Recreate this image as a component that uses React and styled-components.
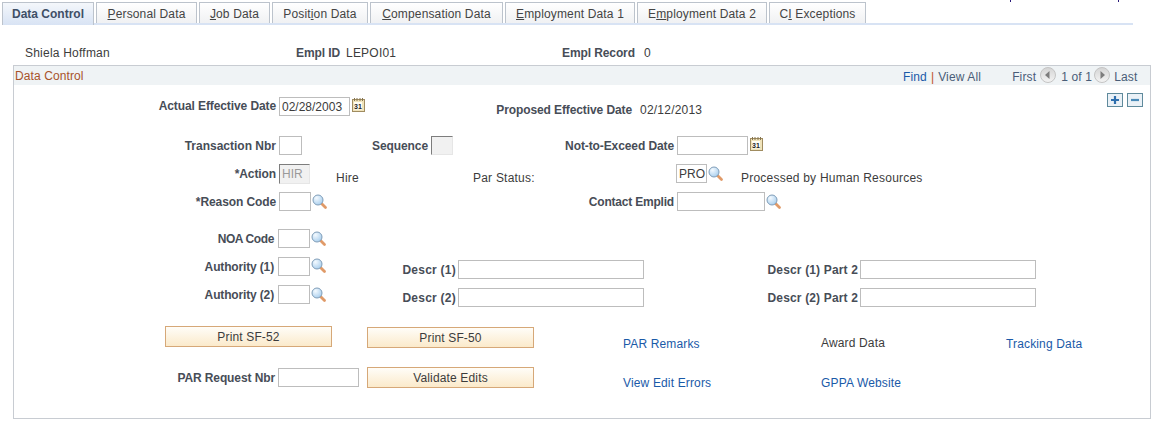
import React from "react";
import styled, { createGlobalStyle } from "styled-components";

const GlobalStyle = createGlobalStyle`
  html, body {
    margin: 0;
    padding: 0;
    background: #fff;
  }
  body {
    font-family: "Liberation Sans", Arial, sans-serif;
    font-size: 12px;
    color: #3c3c3c;
  }
`;

const Page = styled.div`
  width: 1160px;
  height: 426px;
  overflow: hidden;
  box-sizing: border-box;
`;

const TopMarks = styled.div`
  display: flex;
  height: 2px;
  padding-left: 1010px;
  gap: 107px;
`;

const TopMark = styled.span`
  width: 1px;
  height: 2px;
  background: #2a1a7a;
`;

const TabBar = styled.div`
  display: flex;
  gap: 2px;
  width: 1131px;
  height: 21px;
  margin-left: 2px;
  border-bottom: 2px solid #d8e3f4;
`;

const Tab = styled.div`
  box-sizing: border-box;
  width: ${({ $w }) => $w}px;
  height: ${({ $active }) => ($active ? "23px" : "21px")};
  padding-top: 4px;
  text-align: center;
  line-height: 15px;
  letter-spacing: ${({ $active }) => ($active ? "0" : "0.15px")};
  color: ${({ $active }) => ($active ? "#3f4f66" : "#444")};
  font-weight: ${({ $active }) => ($active ? "bold" : "normal")};
  border: 1px solid #bcc3cc;
  border-bottom: none;
  background: ${({ $active }) =>
    $active
      ? "linear-gradient(#f4f7fb, #d8e3f4)"
      : "linear-gradient(#fff, #f0f1f3)"};
`;

const NameRow = styled.div`
  display: flex;
  height: 16px;
  margin-top: 21px;
  line-height: 16px;
`;

const Panel = styled.div`
  box-sizing: border-box;
  width: 1138px;
  height: 354px;
  margin: 3px 0 0 13px;
  border: 1px solid #c8ccd2;
`;

const PanelHeader = styled.div`
  display: flex;
  align-items: center;
  height: 19px;
  background: #eff3f5;
  padding-left: 1px;
`;

const PanelTitle = styled.span`
  color: #a8522a;
  width: 888px;
  letter-spacing: 0.1px;
`;

const HeaderLinks = styled.div`
  display: flex;
  align-items: center;
  padding-top: 3px;
`;

const Pipe = styled.span`
  color: #c0502a;
  margin: 0 4px 0 4px;
`;

const HeaderText = styled.span`
  flex: none;
  width: ${({ $w }) => ($w ? `${$w}px` : "auto")};
  color: #4a5d78;
  white-space: nowrap;
  letter-spacing: 0.15px;
  margin-left: ${({ $ml }) => $ml || 0}px;
`;

const NavButton = styled.svg`
  flex: none;
  width: 16px;
  height: 16px;
  margin: -4px ${({ $mr }) => $mr || 0}px 0 ${({ $ml }) => $ml || 0}px;
`;

const Row = styled.div`
  display: flex;
  align-items: flex-start;
  height: ${({ $h }) => $h || 20}px;
  margin-top: ${({ $mt }) => $mt || 0}px;
`;

const Label = styled.span`
  flex: none;
  box-sizing: border-box;
  width: ${({ $w }) => $w}px;
  margin-left: ${({ $ml }) => $ml || 0}px;
  margin-top: ${({ $t }) => $t ?? 3}px;
  text-align: right;
  white-space: nowrap;
  font-weight: bold;
  line-height: 15px;
  letter-spacing: ${({ $ls }) => $ls ?? -0.1}px;
  color: #474d57;
`;

const Text = styled.span`
  flex: none;
  width: ${({ $w }) => ($w ? `${$w}px` : "auto")};
  margin-left: ${({ $ml }) => $ml || 0}px;
  margin-top: ${({ $t }) => $t || 0}px;
  line-height: 15px;
  white-space: nowrap;
  letter-spacing: ${({ $bold }) => ($bold ? "-0.1px" : "0.22px")};
  font-weight: ${({ $bold }) => ($bold ? "bold" : "normal")};
  color: ${({ $bold }) => ($bold ? "#474d57" : "#3c3c3c")};
`;

const LinkText = styled.a`
  flex: none;
  width: ${({ $w }) => ($w ? `${$w}px` : "auto")};
  margin-left: ${({ $ml }) => $ml || 0}px;
  margin-top: ${({ $t }) => $t || 0}px;
  line-height: 15px;
  letter-spacing: 0.15px;
  color: ${({ $plain }) => ($plain ? "#3c3c3c" : "#1a5aa8")};
`;

const Field = styled.div`
  flex: none;
  box-sizing: border-box;
  width: ${({ $w }) => $w}px;
  height: ${({ $h }) => $h || 19}px;
  margin-left: ${({ $ml }) => $ml ?? 3}px;
  margin-top: ${({ $t }) => $t || 0}px;
  padding: 1px 0 0 2px;
  line-height: 16px;
  background: ${({ $off }) => ($off ? "#f1f1f1" : "#fff")};
  color: ${({ $off }) => ($off ? "#9a9a9a" : "#3c3c3c")};
  border: 1px solid #bdbdbd;
  border-top-color: ${({ $off }) => ($off ? "#7d7d7d" : "#bdbdbd")};
  border-left-color: ${({ $off }) => ($off ? "#7d7d7d" : "#bdbdbd")};
  border-right-color: ${({ $off }) => ($off ? "#e6e6e6" : "#bdbdbd")};
  border-bottom-color: ${({ $off }) => ($off ? "#e6e6e6" : "#bdbdbd")};
`;

const IconSvg = styled.svg`
  flex: none;
  width: ${({ $w }) => $w || 16}px;
  height: ${({ $h }) => $h || 16}px;
  margin-left: ${({ $ml }) => $ml || 1}px;
  margin-top: ${({ $t }) => $t || 0}px;
`;

const PeopleButton = styled.button`
  flex: none;
  box-sizing: border-box;
  width: 167px;
  height: 21px;
  margin-left: ${({ $ml }) => $ml || 0}px;
  margin-top: ${({ $t }) => $t || 0}px;
  padding: 0;
  font-family: inherit;
  font-size: 12px;
  letter-spacing: 0.15px;
  color: #3c3c3c;
  border: 1px solid #d6a878;
  background: linear-gradient(#fffdf8, #fbeacb);
`;

const EditButton = styled.div`
  flex: none;
  box-sizing: border-box;
  width: 16px;
  height: 14px;
  margin-left: ${({ $ml }) => $ml || 0}px;
  margin-top: ${({ $t }) => $t || 0}px;
  border: 1px solid #5f8a9c;
  background: #eaf1f7;
  display: flex;
  align-items: center;
  justify-content: center;
`;

const Lookup = (props) => (
  <IconSvg viewBox="0 0 16 16" {...props}>
    <defs>
      <radialGradient id="lens" cx="35%" cy="30%" r="80%">
        <stop offset="0%" stopColor="#f4faff" />
        <stop offset="100%" stopColor="#a3cbec" />
      </radialGradient>
    </defs>
    <line x1="9.5" y1="9.5" x2="13.5" y2="13.5" stroke="#e09a68" strokeWidth="2.8" strokeLinecap="round" />
    <circle cx="6" cy="6" r="5" fill="url(#lens)" stroke="#7f9db8" strokeWidth="1" />
  </IconSvg>
);

const Calendar = (props) => (
  <IconSvg $w={13} $h={14} viewBox="0 0 13 14" {...props}>
    <rect x="0.5" y="1.5" width="12" height="12" fill="#f0e3bb" stroke="#a08c60" />
    <path d="M2.5 0v3M5 0v3M8 0v3M10.5 0v3" stroke="#85744f" strokeWidth="1" />
    <rect x="2" y="4" width="8" height="7.5" fill="#fffdf2" />
    <text x="6" y="10.5" textAnchor="middle" fontSize="7" fontWeight="bold" fontFamily="Liberation Sans" fill="#222">31</text>
  </IconSvg>
);

const Nav = ({ dir, ...props }) => (
  <NavButton viewBox="0 0 16 16" {...props}>
    <defs>
      <linearGradient id="navg" x1="0" y1="0" x2="0" y2="1">
        <stop offset="0%" stopColor="#d4d4d4" />
        <stop offset="100%" stopColor="#f4f4f4" />
      </linearGradient>
    </defs>
    <circle cx="8" cy="8" r="7.5" fill="url(#navg)" stroke="#c4c4c4" />
    {dir === "left" ? (
      <path d="M9.5 4v8L5 8z" fill="#7d7d7d" />
    ) : (
      <path d="M6.5 4v8L11 8z" fill="#7d7d7d" />
    )}
  </NavButton>
);

const Plus = () => (
  <svg width="10" height="10" viewBox="0 0 10 10">
    <path d="M5 1v8M1 5h8" stroke="#2f6fae" strokeWidth="2.2" />
  </svg>
);

const Minus = () => (
  <svg width="10" height="10" viewBox="0 0 10 10">
    <path d="M1 5h8" stroke="#4a8ab8" strokeWidth="2.2" />
  </svg>
);

const tabs = [
  { w: 92, label: "Data Control", active: true },
  { w: 101, before: "", key: "P", after: "ersonal Data" },
  { w: 71, before: "", key: "J", after: "ob Data" },
  { w: 96, before: "Posit", key: "i", after: "on Data" },
  { w: 133, before: "", key: "C", after: "ompensation Data" },
  { w: 130, before: "", key: "E", after: "mployment Data 1" },
  { w: 130, before: "E", key: "m", after: "ployment Data 2" },
  { w: 97, before: "C", key: "I", after: " Exceptions" },
];

export default function App() {
  return (
    <Page>
      <GlobalStyle />
      <TopMarks>
        <TopMark />
        <TopMark />
      </TopMarks>
      <TabBar>
        {tabs.map((t) => (
          <Tab key={t.w + (t.label || t.after)} $w={t.w} $active={t.active}>
            {t.label || (
              <>
                {t.before}
                <u>{t.key}</u>
                {t.after}
              </>
            )}
          </Tab>
        ))}
      </TabBar>

      <NameRow>
        <Text $ml={25} $w={271}>Shiela Hoffman</Text>
        <Text $bold $w={50}>Empl ID</Text>
        <Text $w={216}>LEPOI01</Text>
        <Text $bold $w={82}>Empl Record</Text>
        <Text>0</Text>
      </NameRow>

      <Panel>
        <PanelHeader>
          <PanelTitle>Data Control</PanelTitle>
          <HeaderLinks>
            <LinkText $w={24}>Find</LinkText>
            <Pipe>|</Pipe>
            <HeaderText $w={42}>View All</HeaderText>
            <HeaderText $ml={32} $w={24}>First</HeaderText>
            <Nav dir="left" $ml={4} $mr={5} />
            <HeaderText $w={28}>1 of 1</HeaderText>
            <Nav dir="right" $ml={5} $mr={4} />
            <HeaderText>Last</HeaderText>
          </HeaderLinks>
        </PanelHeader>

        <Row $mt={12} $h={20}>
          <Label $w={262} $t={2}>Actual Effective Date</Label>
          <Field $w={71}>02/28/2003</Field>
          <Calendar $ml={2} $t={1} />
          <Label $w={136} $ml={131} $t={6}>Proposed Effective Date</Label>
          <Text $ml={8} $t={6} $w={60}>02/12/2013</Text>
          <EditButton $ml={407} $t={-4}><Plus /></EditButton>
          <EditButton $ml={4} $t={-4}><Minus /></EditButton>
        </Row>

        <Row $mt={19} $h={19}>
          <Label $w={262} $ls={0}>Transaction Nbr</Label>
          <Field $w={23} />
          <Label $w={126}>Sequence</Label>
          <Field $w={22} $off />
          <Label $w={221}>Not-to-Exceed Date</Label>
          <Field $w={71} />
          <Calendar $ml={2} $t={1} />
        </Row>

        <Row $mt={9} $h={20}>
          <Label $w={262}>*Action</Label>
          <Field $w={31} $h={20} $off>HIR</Field>
          <Text $ml={26} $t={7} $w={23}>Hire</Text>
          <Text $ml={114} $t={7} $w={60}>Par Status:</Text>
          <Field $w={31} $ml={143}>PRO</Field>
          <Lookup $t={2} />
          <Text $ml={17} $t={7}>Processed by Human Resources</Text>
        </Row>

        <Row $mt={8} $h={19}>
          <Label $w={262}>*Reason Code</Label>
          <Field $w={32} />
          <Lookup $t={2} />
          <Label $w={346} $ls={-0.2}>Contact Emplid</Label>
          <Field $w={88} />
          <Lookup $t={2} />
        </Row>

        <Row $mt={18} $h={19}>
          <Label $w={260} $ls={-0.4}>NOA Code</Label>
          <Field $w={32} $ml={4} />
          <Lookup $t={2} />
        </Row>

        <Row $mt={9} $h={20}>
          <Label $w={260} $ls={-0.15}>Authority (1)</Label>
          <Field $w={32} $ml={4} />
          <Lookup $t={1} />
          <Label $w={129} $t={6} $ls={0.25}>Descr (1)</Label>
          <Field $w={186} $ml={2} $t={3} />
          <Label $w={214} $t={6} $ls={0.15}>Descr (1) Part 2</Label>
          <Field $w={176} $ml={2} $t={3} />
        </Row>

        <Row $mt={8} $h={23}>
          <Label $w={260} $ls={-0.15}>Authority (2)</Label>
          <Field $w={32} $ml={4} />
          <Lookup $t={2} />
          <Label $w={129} $t={6} $ls={0.25}>Descr (2)</Label>
          <Field $w={186} $ml={2} $t={3} />
          <Label $w={214} $t={6} $ls={0.15}>Descr (2) Part 2</Label>
          <Field $w={176} $ml={2} $t={3} />
        </Row>

        <Row $mt={18} $h={22}>
          <PeopleButton $ml={151}>Print SF-52</PeopleButton>
          <PeopleButton $ml={35} $t={1}>Print SF-50</PeopleButton>
          <LinkText $ml={89} $t={11} $w={198}>PAR Remarks</LinkText>
          <LinkText $plain $t={10} $w={185}>Award Data</LinkText>
          <LinkText $t={11}>Tracking Data</LinkText>
        </Row>

        <Row $mt={19} $h={21}>
          <Label $w={261} $t={4} $ls={-0.1}>PAR Request Nbr</Label>
          <Field $w={81} $ml={3} $t={1} />
          <PeopleButton $ml={8}>Validate Edits</PeopleButton>
          <LinkText $ml={89} $t={9} $w={198}>View Edit Errors</LinkText>
          <LinkText $t={9}>GPPA Website</LinkText>
        </Row>
      </Panel>
    </Page>
  );
}
